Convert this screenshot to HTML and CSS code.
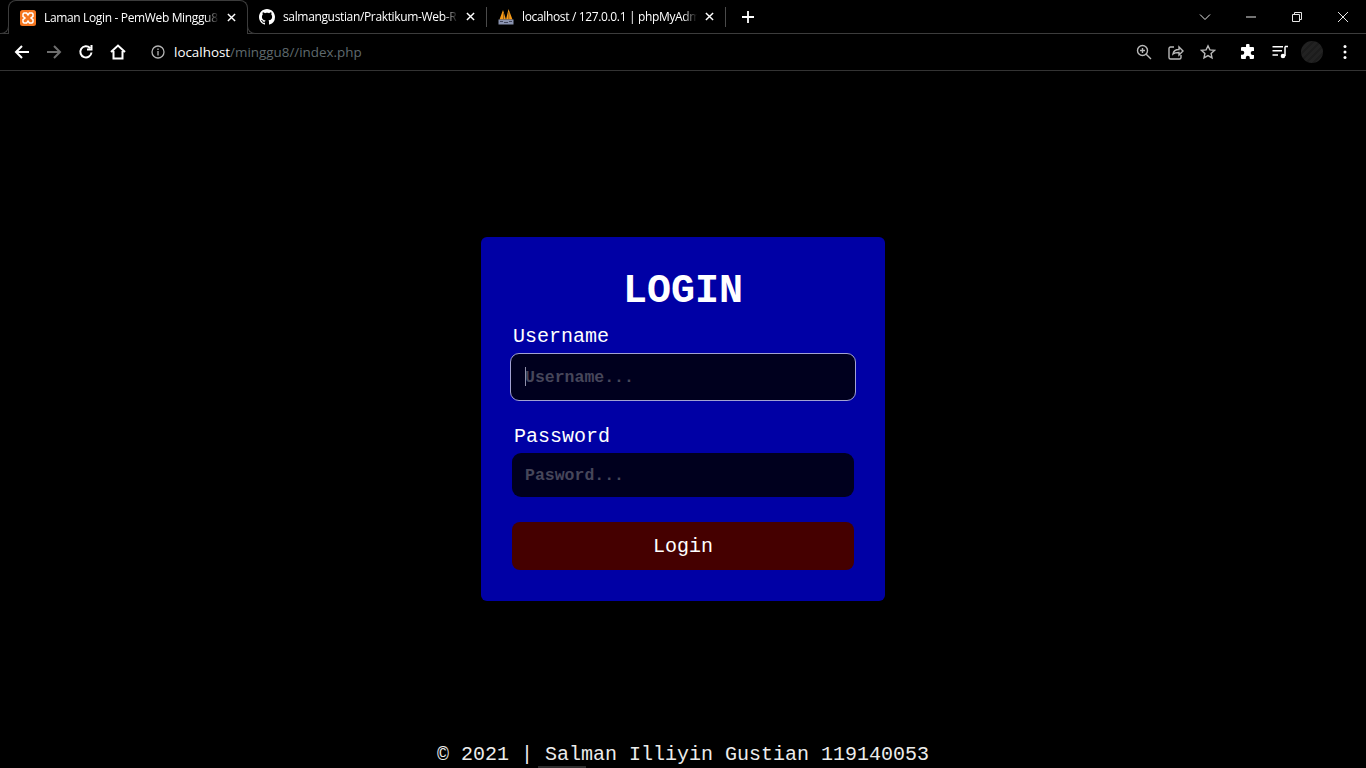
FILE: index.html
```html
<!DOCTYPE html>
<html lang="en">
<head>
  <meta charset="UTF-8">
  <meta name="viewport" content="width=device-width, initial-scale=1.0">
  <title>Laman Login - PemWeb Minggu 8</title>
  <link rel="stylesheet" href="styles.css">
</head>
<body>
  <header class="browser">
    <div class="tabstrip">
      <div class="tab tab-active">
        <svg class="favicon" viewBox="0 0 16 16">
          <rect width="16" height="16" rx="2.5" fill="#f5761f"/>
          <path d="M4 3h2.600L8 5l1.400-2H12l1 1v2.400L11 8l2 1.600V12l-1 1H9.400L8 11l-1.400 2H4l-1-1V9.600L5 8 3 6.400V4z" fill="none" stroke="#fff" stroke-width="1.500"/>
        </svg>
        <span class="tab-title">Laman Login - PemWeb Minggu8</span>
        <svg class="tab-close" viewBox="0 0 10 10"><path d="M1 1l8 8M9 1l-8 8"/></svg>
      </div>
      <div class="tab">
        <svg class="favicon" viewBox="0 0 16 16">
          <path fill="#fff" d="M8 0C3.580 0 0 3.580 0 8c0 3.540 2.290 6.530 5.470 7.590.4.070.55-.17.55-.38 0-.19-.01-.82-.01-1.490-2.010.37-2.530-.49-2.690-.94-.09-.23-.48-.94-.82-1.130-.28-.15-.68-.52-.01-.53.63-.01 1.080.58 1.230.82.720 1.210 1.870.87 2.330.66.070-.52.280-.87.510-1.070-1.780-.2-3.640-.89-3.640-3.950 0-.87.310-1.590.820-2.150-.08-.2-.36-1.020.08-2.120 0 0 .67-.21 2.200.82.640-.18 1.320-.27 2-.27s1.360.09 2 .27c1.530-1.040 2.200-.82 2.200-.82.440 1.100.160 1.920.080 2.120.510.560.820 1.270.820 2.150 0 3.070-1.870 3.750-3.650 3.950.290.250.540.730.540 1.480 0 1.070-.01 1.930-.01 2.200 0 .210.150.460.550.380A8.010 8.010 0 0 0 16 8c0-4.420-3.580-8-8-8z"/>
        </svg>
        <span class="tab-title">salmangustian/Praktikum-Web-R</span>
        <svg class="tab-close" viewBox="0 0 10 10"><path d="M1 1l8 8M9 1l-8 8"/></svg>
      </div>
      <div class="tab-sep"></div>
      <div class="tab">
        <svg class="favicon" viewBox="0 0 16 16">
          <path fill="#f79a16" d="M1.500 10.500L5 1l3 9.500zM8 10.500L10.500 0l4 10.500z"/>
          <path fill="none" stroke="#7a4a10" stroke-width="0.700" d="M5.500 4v6.500M10.800 3v7.500"/>
          <rect x="0.500" y="10.500" width="15" height="5" fill="#8a93b0"/>
          <path fill="none" stroke="#2e3246" stroke-width="0.800" d="M2 12.500h3M6 13.500h4M11 12.500h3"/>
        </svg>
        <span class="tab-title">localhost / 127.0.0.1 | phpMyAdm</span>
        <svg class="tab-close" viewBox="0 0 10 10"><path d="M1 1l8 8M9 1l-8 8"/></svg>
      </div>
      <div class="tab-sep"></div>
      <svg class="new-tab" viewBox="0 0 12 12"><path d="M6 0v12M0 6h12"/></svg>
      <div class="window-controls">
        <svg class="win-icon" viewBox="0 0 12 12"><path d="M1 3.500l5 5 5-5"/></svg>
        <svg class="win-icon" viewBox="0 0 12 12"><path d="M1 6h10"/></svg>
        <svg class="win-icon" viewBox="0 0 12 12"><path d="M1.500 3.500h7v7h-7zM3.500 3.500v-2h7v7h-2"/></svg>
        <svg class="win-icon" viewBox="0 0 12 12"><path d="M1 1l10 10M11 1L1 11"/></svg>
      </div>
    </div>
    <div class="toolbar">
      <svg class="nav-icon" viewBox="0 0 16 16"><path d="M15 8H2M8 2L2 8l6 6"/></svg>
      <svg class="nav-icon nav-off" viewBox="0 0 16 16"><path d="M1 8h13M8 2l6 6-6 6"/></svg>
      <svg class="nav-icon" viewBox="0 0 16 16"><path d="M13.500 8.500A5.600 5.600 0 1 1 12 4M13.500 1v4.500H9"/></svg>
      <svg class="nav-icon" viewBox="0 0 16 16"><path d="M1 8l7-6.500L15 8M3.500 7v7.500h9V7"/></svg>
      <svg class="info-icon" viewBox="0 0 14 14">
        <circle cx="7" cy="7" r="6"/>
        <path d="M7 6v4.500M7 3.500v1.400"/>
      </svg>
      <div class="url"><span class="url-host">localhost</span>/minggu8//index.php</div>
      <div class="toolbar-actions">
        <svg class="act-icon" viewBox="0 0 16 16"><circle cx="6.500" cy="6.500" r="5"/><path d="M10.200 10.200L15 15M4 6.500h5M6.500 4v5"/></svg>
        <svg class="act-icon" viewBox="0 0 16 16"><path d="M6 3H2.500A1.500 1.500 0 0 0 1 4.500v9A1.500 1.500 0 0 0 2.500 15h9a1.500 1.500 0 0 0 1.500-1.500V11M5 10c.5-3 3-4.500 6-4.500V3l4 4-4 4V8.500c-2.500 0-4.500.3-6 1.500z"/></svg>
        <svg class="act-icon" viewBox="0 0 16 16"><path d="M8 1.800l1.900 4.100 4.500.5-3.300 3 .9 4.500L8 11.600l-4 2.300.9-4.500-3.300-3 4.500-.5z"/></svg>
        <svg class="act-icon act-fill act-gap" viewBox="0 0 16 16"><path d="M6 1.500a1.800 1.800 0 0 1 3.600 0V3H13a1 1 0 0 1 1 1v3h-1.300a2 2 0 0 0 0 4H14v3a1 1 0 0 1-1 1H9.800v-1.300a2 2 0 0 0-4 0V15H2a1 1 0 0 1-1-1v-3.200h1.300a2 2 0 0 0 0-4H1V4a1 1 0 0 1 1-1h4z"/></svg>
        <svg class="act-icon act-music" viewBox="0 0 16 16"><path d="M0.500 2.700H11M0.500 6.700H10M0.500 11H6M13 2.500V12M13 2.500h3"/><circle class="dot" cx="11" cy="12" r="2.300"/></svg>
        <div class="avatar"></div>
        <svg class="menu-icon" viewBox="0 0 4 16"><circle cx="2" cy="2.500" r="1.500"/><circle cx="2" cy="8" r="1.500"/><circle cx="2" cy="13.500" r="1.500"/></svg>
      </div>
    </div>
  </header>

  <main class="page">
    <form class="login-card" onsubmit="return false">
      <h1 class="login-title">LOGIN</h1>
      <label class="field-label" for="username">Username</label>
      <div class="input-wrap">
        <input class="text-input is-focused" id="username" type="text" placeholder="Username...">
        <span class="caret"></span>
      </div>
      <label class="field-label field-label-pass" for="password">Password</label>
      <input class="text-input" id="password" type="password" placeholder="Pasword...">
      <button class="login-btn" type="submit">Login</button>
    </form>
  </main>

  <footer class="page-footer">© 2021 | Salman Illiyin Gustian 119140053</footer>
  <div class="scroll-mark"></div>
</body>
</html>
```

FILE: styles.css
```css
* {
  box-sizing: border-box;
}

html, body {
  height: 100%;
}

body {
  margin: 0;
  height: 768px;
  overflow: hidden;
  display: flex;
  flex-direction: column;
  background-color: #000;
  color: #fff;
  font-family: "Liberation Mono", monospace;
}

svg {
  display: block;
  flex: none;
}

/* browser chrome */
.browser {
  font-family: "Open Sans", "Liberation Sans", sans-serif;
  flex: none;
}

.tabstrip {
  height: 34px;
  display: flex;
  align-items: center;
  padding-left: 8px;
  border-bottom: 1px solid #3c3c3c;
}

.tab {
  width: 238px;
  height: 33px;
  display: flex;
  align-items: center;
  padding: 0 11px;
  font-size: 12px;
}

.tab-active {
  position: relative;
  width: 240px;
  height: 34px;
  border: 1px solid #3c3c3c;
  border-bottom: none;
  border-radius: 8px 8px 0 0;
  background-color: #000;
  align-self: flex-start;
}

.tab-active::before,
.tab-active::after {
  content: "";
  position: absolute;
  bottom: 0;
  width: 8px;
  height: 8px;
  border-bottom: 1px solid #3c3c3c;
  background-color: #000;
}

.tab-active::before {
  left: -9px;
  border-right: 1px solid #3c3c3c;
  border-bottom-right-radius: 8px;
}

.tab-active::after {
  right: -9px;
  border-left: 1px solid #3c3c3c;
  border-bottom-left-radius: 8px;
}

.favicon {
  width: 16px;
  height: 16px;
  margin-right: 8px;
}

.tab-title {
  flex: 1;
  min-width: 0;
  white-space: nowrap;
  overflow: hidden;
  letter-spacing: -0.35px;
  -webkit-mask-image: linear-gradient(to right, #000 calc(100% - 14px), transparent);
  mask-image: linear-gradient(to right, #000 calc(100% - 14px), transparent);
}

.tab-close {
  width: 9px;
  height: 9px;
  margin-left: 8px;
  fill: none;
  stroke: #fff;
  stroke-width: 1.6;
}

.tab-sep {
  width: 1px;
  height: 20px;
  background-color: #4a4a4a;
}

.new-tab {
  width: 12px;
  height: 12px;
  margin-left: 16px;
  fill: none;
  stroke: #fff;
  stroke-width: 1.800;
}

.window-controls {
  margin-left: auto;
  display: flex;
  align-items: center;
  gap: 34px;
  padding-right: 17px;
}

.win-icon {
  width: 12px;
  height: 12px;
  fill: none;
  stroke: #e6e6e6;
  stroke-width: 1;
}

.toolbar {
  height: 37px;
  display: flex;
  align-items: center;
  padding: 0 19px 0 14px;
  border-bottom: 1px solid #333;
}

.nav-icon {
  width: 16px;
  height: 16px;
  margin-right: 16px;
  fill: none;
  stroke: #fff;
  stroke-width: 2;
}

.nav-off {
  stroke: #6e6e6e;
}

.info-icon {
  width: 14px;
  height: 14px;
  margin-left: 9px;
  fill: none;
  stroke: #b4b4b4;
  stroke-width: 1.300;
}

.url {
  margin-left: 9px;
  font-size: 13.400px;
  color: #5f6a6e;
  white-space: nowrap;
}

.url-host {
  color: #fff;
}

.toolbar-actions {
  margin-left: auto;
  display: flex;
  align-items: center;
  gap: 16px;
}

.act-icon {
  width: 16px;
  height: 16px;
  fill: none;
  stroke: #b9b9b9;
  stroke-width: 1.400;
}

.act-fill {
  fill: #fff;
  stroke: none;
}

.act-gap {
  margin-left: 8px;
}

.act-music {
  stroke: #fff;
  stroke-width: 1.500;
}

.act-music .dot {
  fill: #fff;
  stroke: none;
}

.avatar {
  width: 22px;
  height: 22px;
  margin-left: -3px;
  border-radius: 50%;
  background: repeating-linear-gradient(135deg, #222 0 3px, #1c1c1c 3px 5px);
}

.menu-icon {
  width: 4px;
  height: 16px;
  margin-left: 4px;
  fill: #fff;
}

/* login page */
.page {
  flex: 1;
  display: flex;
  justify-content: center;
  padding-top: 166px;
}

.login-card {
  width: 404px;
  height: 364px;
  padding: 32px 31px 0;
  display: flex;
  flex-direction: column;
  border-radius: 6px;
  background-color: #0000a5;
}

.login-title {
  margin: 0 0 11px;
  font-size: 40px;
  line-height: 45px;
  font-weight: 700;
  text-align: center;
}

.field-label {
  display: block;
  margin-left: 1px;
  font-size: 20px;
  line-height: 23px;
}

.field-label-pass {
  margin: 24px 0 5px 2px;
}

.input-wrap {
  position: relative;
  margin: 5px -2px 0;
}

.text-input {
  display: block;
  width: 100%;
  height: 44px;
  padding: 0 13px;
  border: none;
  border-radius: 9px;
  outline: none;
  background-color: #00001e;
  color: #fff;
  font-family: "Liberation Mono", monospace;
  font-size: 16.500px;
  font-weight: 700;
}

.text-input::placeholder {
  color: #46465a;
  opacity: 1;
}

.is-focused {
  height: 48px;
  padding: 0 14px;
  border: 1px solid #a2a2d2;
}

.caret {
  position: absolute;
  left: 15px;
  top: 14px;
  width: 1px;
  height: 19px;
  background-color: #8f8fa8;
}

.login-btn {
  height: 48px;
  margin-top: 25px;
  border: none;
  border-radius: 8px;
  background-color: #450000;
  color: #fff;
  font-family: "Liberation Mono", monospace;
  font-size: 20px;
  cursor: pointer;
}

.page-footer {
  flex: none;
  height: 28px;
  padding-top: 1px;
  text-align: center;
  font-size: 20px;
  line-height: 28px;
  color: #ececec;
}

.scroll-mark {
  position: absolute;
  left: 538px;
  bottom: 0;
  width: 48px;
  height: 2px;
  background-color: #2e2e2e;
}
```
